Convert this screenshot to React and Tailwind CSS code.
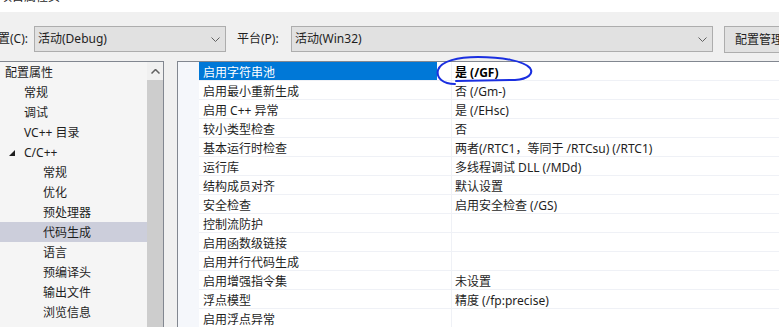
import React from "react";

const tree = [
  { label: "配置属性", level: 0 },
  { label: "常规", level: 1 },
  { label: "调试", level: 1 },
  { label: "VC++ 目录", level: 1 },
  { label: "C/C++", level: 1, open: true },
  { label: "常规", level: 2 },
  { label: "优化", level: 2 },
  { label: "预处理器", level: 2 },
  { label: "代码生成", level: 2, selected: true },
  { label: "语言", level: 2 },
  { label: "预编译头", level: 2 },
  { label: "输出文件", level: 2 },
  { label: "浏览信息", level: 2 },
];

const rows = [
  ["启用字符串池", "是 (/GF)"],
  ["启用最小重新生成", "否 (/Gm-)"],
  ["启用 C++ 异常", "是 (/EHsc)"],
  ["较小类型检查", "否"],
  ["基本运行时检查", "两者(/RTC1，等同于 /RTCsu) (/RTC1)"],
  ["运行库", "多线程调试 DLL (/MDd)"],
  ["结构成员对齐", "默认设置"],
  ["安全检查", "启用安全检查 (/GS)"],
  ["控制流防护", ""],
  ["启用函数级链接", ""],
  ["启用并行代码生成", ""],
  ["启用增强指令集", "未设置"],
  ["浮点模型", "精度 (/fp:precise)"],
  ["启用浮点异常", ""],
];

function Chevron() {
  return (
    <svg width="9" height="5" viewBox="0 0 9 5" className="shrink-0">
      <path d="M0.5 0.5 L4.5 4.5 L8.5 0.5" fill="none" stroke="#606060" strokeWidth="1" />
    </svg>
  );
}

function Combo({ text, className }) {
  return (
    <div
      className={`h-[26px] shrink-0 flex items-center justify-between pl-[3px] pr-[5px] bg-[#e1e1e1] border border-[#adadad] ${className}`}
    >
      <span>{text}</span>
      <Chevron />
    </div>
  );
}

export default function App() {
  const pad = { 0: "pl-[5px]", 1: "pl-[24px]", 2: "pl-[43px]" };

  return (
    <div className="relative w-[779px] h-[327px] overflow-hidden bg-[#f0f0f0] flex flex-col text-[12px] text-[#1e1e1e] font-['Noto_Sans','Noto_Sans_CJK_SC',sans-serif]">
      {/* window title, mostly scrolled off the top */}
      <div className="h-[12px] bg-white overflow-hidden shrink-0">
        <div className="mt-[-11px] leading-[16px] text-[12px]">项目属性页</div>
      </div>

      <div className="h-[49px] shrink-0 flex items-start pt-[14px] whitespace-nowrap">
        <div className="h-[26px] shrink-0 flex items-center ml-[-14px] w-[48px]">配置(C):</div>
        <Combo text="活动(Debug)" className="w-[192px]" />
        <div className="h-[26px] shrink-0 flex items-center ml-[11px] w-[54px]">平台(P):</div>
        <Combo text="活动(Win32)" className="w-[422px]" />
        <div className="ml-[11px] h-[27px] w-[90px] shrink-0 flex items-center pl-[10px] bg-[#e1e1e1] border border-[#adadad]">
          配置管理器
        </div>
      </div>

      <div className="flex flex-1 min-h-0">
        <div className="w-[164px] shrink-0 flex border-t border-r border-[#828790]">
          <div className="w-[147px] bg-[#f5f5f5]">
            {tree.map((t, i) => (
              <div
                key={i}
                className={`h-[20px] pt-[2px] flex items-center whitespace-nowrap relative ${pad[t.level]} ${
                  t.selected ? "bg-[#cccedb]" : ""
                }`}
              >
                {t.open && (
                  <svg width="6" height="6" viewBox="0 0 6 6" className="absolute left-[9px] top-[8px]">
                    <polygon points="6,0 6,6 0,6" fill="#1e1e1e" />
                  </svg>
                )}
                {t.label}
              </div>
            ))}
          </div>
          <div className="w-[16px] flex flex-col bg-[#f0f0f0]">
            <div className="h-[18px] flex items-center justify-center">
              <svg width="9" height="5" viewBox="0 0 9 5">
                <path d="M0.5 4.5 L4.5 0.5 L8.5 4.5" fill="none" stroke="#606060" strokeWidth="1.5" />
              </svg>
            </div>
            <div className="flex-1 bg-[#cdcdcd]" />
          </div>
        </div>

        <div className="ml-[13px] flex-1 flex border-t border-l border-[#828790] bg-[#f5f7fb]">
          <div className="w-[21px] shrink-0" />
          <div className="flex-1 bg-white">
            {rows.map(([name, value], i) => (
              <div key={i} className="h-[19px] flex border-b border-[#eff1f6] whitespace-nowrap">
                <div className="w-[253px] shrink-0 flex border-r border-[#eff1f6]">
                  <div
                    className={`h-full flex items-center pl-[4px] pt-[3px] ${
                      i === 0 ? "w-[238px] bg-[#0078d7] text-white" : "flex-1"
                    }`}
                  >
                    {name}
                  </div>
                </div>
                <div className={`flex items-center pl-[3px] pt-[3px] ${i === 0 ? "font-bold text-black" : ""}`}>
                  {value}
                </div>
              </div>
            ))}
          </div>
        </div>
      </div>

      <svg className="absolute left-0 top-0 pointer-events-none" width="779" height="327">
        <path
          d="M455 84 C443 84, 436 78, 438 70 C441 61, 458 57, 478 57 C502 57, 524 61, 530 68 C534 74, 528 79, 515 80 L456 81"
          fill="none"
          stroke="#1a2fe0"
          strokeWidth="2"
          strokeLinecap="round"
        />
      </svg>
    </div>
  );
}
